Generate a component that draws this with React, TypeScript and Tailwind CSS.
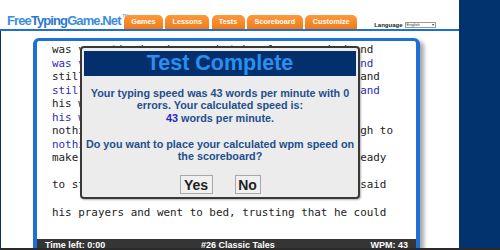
import React from "react";

const lines: { t: string; b?: boolean }[] = [
  { t: "was very tired and poor, but he always worked and" },
  { t: "was very tired and poor, but he always worked and", b: true },
  { t: "still he could not earn enough money for food, and" },
  { t: "still he could not earn enough money for food, and", b: true },
  { t: "his wife and children were often hungry;" },
  { t: "his wife and children were often hungry;", b: true },
  { t: "nothing was left but one piece of leather, enough to" },
  { t: "nothing was left but one", b: true },
  { t: "make just one pair of shoes. He cut them, all ready" },
  { t: "" },
  { t: "to start working next morning. That evening he said" },
  { t: "" },
  { t: "his prayers and went to bed, trusting that he could" },
  { t: "" },
  { t: "" },
];

const tabs: { label: string; w: string }[] = [
  { label: "Games", w: "w-[39px]" },
  { label: "Lessons", w: "w-[44px]" },
  { label: "Tests", w: "w-[33px]" },
  { label: "Scoreboard", w: "w-[56px]" },
  { label: "Customize", w: "w-[52px]" },
];

export default function App() {
  return (
    <div
      className="w-[500px] h-[250px] flex flex-col overflow-hidden bg-white"
      style={{ fontFamily: '"Liberation Sans", Arial, sans-serif' }}
    >
      <div className="flex flex-1 min-h-0">
        <div className="w-[459px] flex flex-col">
          {/* header */}
          <div className="h-[29px] flex items-end shrink-0">
            <div className="w-[124px] pl-[7px] mb-[2px] flex items-start">
              <span className="text-[13px] leading-[13px] font-bold tracking-[-0.9px] text-[#3b8ddb]">
                Free<span className="text-[#2a78cc]">Typing</span>Game.Net
              </span>
              <span className="text-[7px] leading-[7px] text-[#5d7fa8] ml-[1px] -mt-[1px]">™</span>
            </div>
            <div className="flex items-end gap-[2.3px]">
              {tabs.map((t) => (
                <div
                  key={t.label}
                  className={`${t.w} h-[14px] rounded-t-[5px] bg-gradient-to-b from-[#fb9a3c] to-[#f27a12] flex items-center justify-center text-white font-bold text-[7.3px] leading-none`}
                >
                  {t.label}
                </div>
              ))}
            </div>
            <div className="ml-[17px] mb-[1px] flex items-end gap-[2px]">
              <span className="text-[6px] leading-[6px] font-bold text-[#222] mb-[0.5px]">Language</span>
              <div className="w-[31px] h-[6px] border border-[#999] bg-white flex items-center justify-between px-[1px]">
                <span className="text-[4px] leading-[4px] text-[#333]">English</span>
                <span className="text-[4px] leading-[4px] text-[#333]">▾</span>
              </div>
            </div>
          </div>
          <div className="h-[2px] bg-[#1f6fd3] shrink-0" />
          {/* content */}
          <div className="flex-1 min-h-0 border-l border-[#0a2d66] pl-[32px] pt-[7px] relative overflow-hidden">
            <div className="w-[387px] h-[240px] border-[3px] border-l-4 border-r-4 border-[#1e6fd6] rounded-t-[6px] shadow-[4px_3px_4px_rgba(0,0,0,0.35)] bg-white flex flex-col">
              <div
                className="h-[198px] pl-[15px] pt-[2px] text-[10.9px] leading-[13.55px] text-[#222] overflow-hidden"
                style={{ fontFamily: '"DejaVu Sans Mono", monospace' }}
              >
                {lines.map((l, i) => (
                  <div key={i} className={`h-[13.55px] whitespace-pre ${l.b ? "text-[#2c2cb4]" : "text-[#222]"}`}>
                    {l.t || " "}
                  </div>
                ))}
              </div>
              <div className="h-[16px] bg-[#353535] flex items-start justify-between px-[8px] pt-[1px] text-white font-bold text-[9px] leading-[11px]">
                <span>Time left: 0:00</span>
                <span>#26 Classic Tales</span>
                <span>WPM: 43</span>
              </div>
            </div>

            {/* dialog */}
            <div className="absolute left-[79px] top-[15px] w-[280px] h-[153px] border-2 border-[#383838] rounded-[4px] bg-[#ececec] px-[2px] pt-[3px] flex flex-col items-center shadow-[1px_1px_2px_rgba(0,0,0,0.3)]">
              <div className="w-full h-[25px] bg-[#03306c] flex items-center justify-center">
                <span className="text-[21.5px] leading-none font-bold text-[#2b8ff0]">Test Complete</span>
              </div>
              <div className="mt-[11px] text-center font-bold text-[10.8px] leading-[12.3px] text-[#1e4f8f]">
                <p>
                  Your typing speed was 43 words per minute with 0<br />
                  errors. Your calculated speed is:<br />
                  <span className="text-[#2424c8]">43</span> words per minute.
                </p>
                <p className="mt-[14px]">
                  Do you want to place your calculated wpm speed on<br />
                  the scoreboard?
                </p>
              </div>
              <div className="mt-[13px] flex gap-[22px]">
                <button className="w-[33px] h-[19px] border border-[#a8a8a8] bg-[#f0f0f0] text-[14px] font-bold text-[#222] leading-none flex items-center justify-center">
                  Yes
                </button>
                <button className="w-[26px] h-[19px] border border-[#a8a8a8] bg-[#f0f0f0] text-[14px] font-bold text-[#222] leading-none flex items-center justify-center">
                  No
                </button>
              </div>
            </div>
          </div>
        </div>
        <div className="w-[41px] bg-[#03336f]" />
      </div>
      <div className="h-[2px] bg-[#2a2a2a] shrink-0" />
    </div>
  );
}
